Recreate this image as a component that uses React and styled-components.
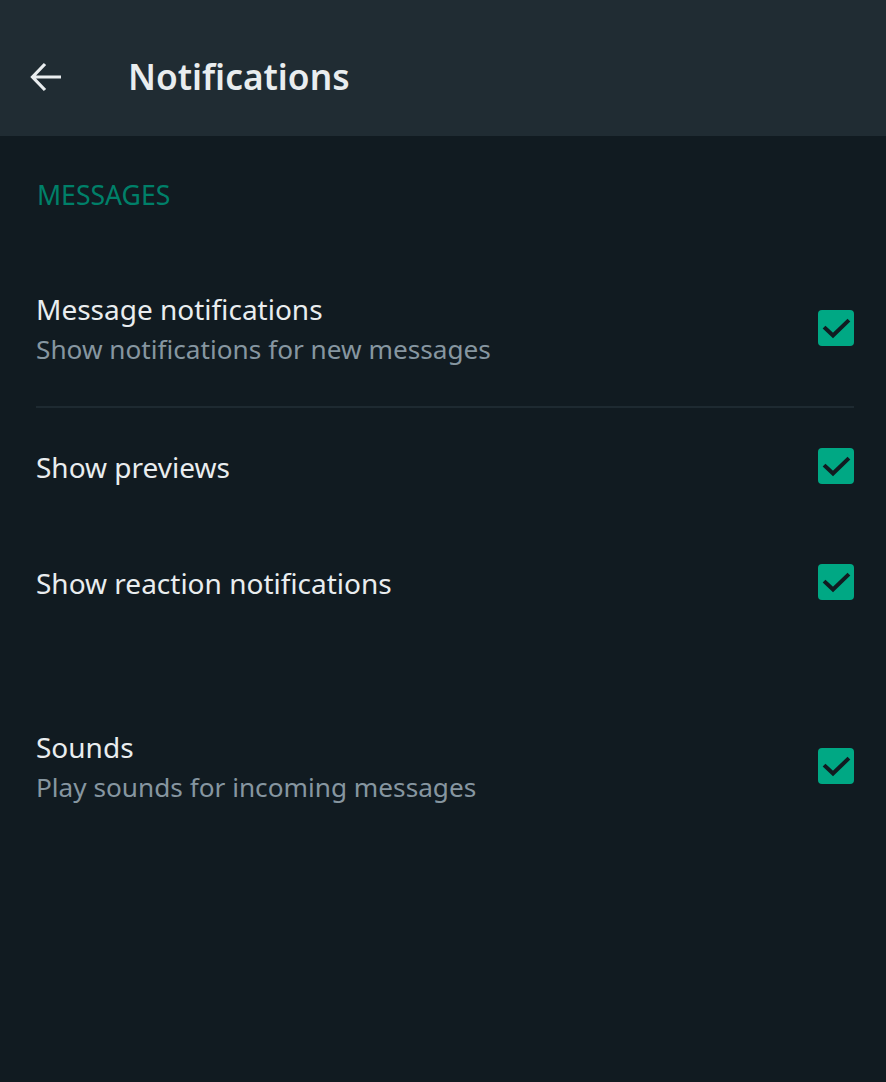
import React from "react";
import styled, { createGlobalStyle } from "styled-components";

const Global = createGlobalStyle`
  html, body { margin: 0; padding: 0; background: #111b21; }
  body { font-family: "Noto Sans", "Open Sans", sans-serif; }
`;

const Page = styled.div`
  width: 886px;
  min-height: 1082px;
  background: #111b21;
  display: flex;
  flex-direction: column;
`;

const Header = styled.header`
  height: 136px;
  background: #202c33;
  display: flex;
  align-items: center;
  padding: 18px 0 0 28px;
  gap: 64px;
  box-sizing: border-box;
`;

const BackButton = styled.button`
  width: 36px;
  height: 36px;
  padding: 0;
  border: 0;
  background: transparent;
  display: flex;
  align-items: center;
  justify-content: center;
  color: #e9edef;
`;

const Title = styled.h1`
  margin: 0;
  font-size: 35.3px;
  font-weight: 600;
  color: #e9edef;
  letter-spacing: 0;
  line-height: 1;
`;

const Content = styled.main`
  padding: 0 32px 0 36px;
  display: flex;
  flex-direction: column;
`;

const SectionTitle = styled.div`
  height: 114px;
  display: flex;
  align-items: center;
  padding: 4px 0 0 1px;
  box-sizing: border-box;
  font-size: 26.6px;
  color: #008069;
  text-transform: uppercase;
`;

const Row = styled.div`
  height: ${(p) => p.$h}px;
  margin-top: ${(p) => p.$mt || 0}px;
  display: flex;
  align-items: center;
  justify-content: space-between;
  border-bottom: ${(p) => (p.$divider ? "2px solid #1e2a31" : "none")};
  box-sizing: border-box;
`;

const Texts = styled.div`
  display: flex;
  flex-direction: column;
  gap: 2px;
  padding-top: 2px;
`;

const Primary = styled.div`
  font-size: 28px;
  color: #e9edef;
  line-height: 38px;
`;

const Secondary = styled.div`
  font-size: 26.2px;
  color: #8696a0;
  line-height: 38px;
`;

const Box = styled.span`
  width: 36px;
  height: 36px;
  border-radius: 4px;
  background: #00a884;
  display: flex;
  flex-shrink: 0;
`;

const Check = () => (
  <Box>
    <svg width="36" height="36" viewBox="0 0 36 36">
      <path d="M7.5 18.5 L15 25.5 L29.5 11.5" fill="none" stroke="#111b21" strokeWidth="4" strokeLinecap="square" />
    </svg>
  </Box>
);

const Arrow = () => (
  <svg width="36" height="36" viewBox="0 0 36 36">
    <path d="M33 18 H5 M17 5 L4.5 18 L17 31" fill="none" stroke="#e9edef" strokeWidth="3.2" strokeLinecap="butt" strokeLinejoin="miter" />
  </svg>
);

const items = [
  { title: "Message notifications", sub: "Show notifications for new messages", h: 158, divider: true },
  { title: "Show previews", h: 116 },
  { title: "Show reaction notifications", h: 116 },
  { title: "Sounds", sub: "Play sounds for incoming messages", h: 156, mt: 48 },
];

export default function App() {
  return (
    <Page>
      <Global />
      <Header>
        <BackButton aria-label="Back"><Arrow /></BackButton>
        <Title>Notifications</Title>
      </Header>
      <Content>
        <SectionTitle>Messages</SectionTitle>
        {items.map((it) => (
          <Row key={it.title} $h={it.h} $mt={it.mt} $divider={it.divider}>
            <Texts>
              <Primary>{it.title}</Primary>
              {it.sub && <Secondary>{it.sub}</Secondary>}
            </Texts>
            <Check />
          </Row>
        ))}
      </Content>
    </Page>
  );
}
